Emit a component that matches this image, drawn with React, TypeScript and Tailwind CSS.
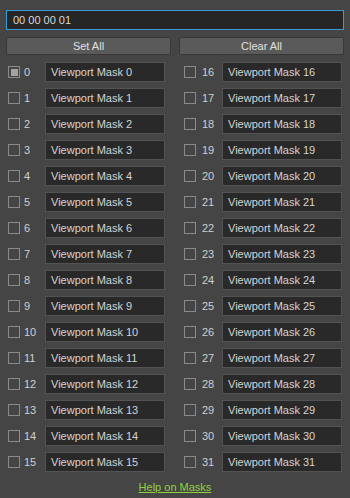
import React from "react";

function Row({ n, checked, right }: { n: number; checked?: boolean; right?: boolean }) {
  return (
    <div className="flex items-center h-[20px]">
      <div className="w-[12px] h-[12px] border border-[#8a8a8a] flex items-center justify-center shrink-0">
        {checked && <div className="w-[7px] h-[7px] bg-[#a3a3a3]" />}
      </div>
      <div className={(right ? "w-[26px] pl-[6px]" : "w-[25px] pl-[4px]") + " text-[#cfcfcf] text-[11px] leading-none shrink-0"}>{n}</div>
      <div className="w-[120px] h-[20px] bg-[#292929] border border-[#535353] flex items-center px-[5px] text-[#d4d4d4] text-[11px] leading-none shrink-0">
        Viewport Mask {n}
      </div>
    </div>
  );
}

export default function App() {
  const left = Array.from({ length: 16 }, (_, i) => i);
  return (
    <div
      className="w-[350px] h-[498px] bg-[#454545] px-[6px] pt-[10px] overflow-hidden"
      style={{ fontFamily: '"Liberation Sans", Arial, sans-serif' }}
    >
      <div className="h-[20px] border border-[#3a9ad9] bg-[#262626] flex items-center px-[6px] text-[#d8d8d8] text-[11px] leading-none">
        00 00 00 01
      </div>
      <div className="mt-[7px] flex gap-[8px]">
        <div className="flex-1 h-[18px] bg-[#5a5a5a] border border-[#383838] rounded-[2px] flex items-center justify-center text-[#e0e0e0] text-[11px] leading-none">
          Set All
        </div>
        <div className="flex-1 h-[18px] bg-[#5a5a5a] border border-[#383838] rounded-[2px] flex items-center justify-center text-[#e0e0e0] text-[11px] leading-none">
          Clear All
        </div>
      </div>
      <div className="mt-[7px] pl-[2px] grid grid-cols-[176px_1fr] grid-flow-col grid-rows-[repeat(16,20px)] gap-y-[6px]">
        {left.map((i) => (
          <Row key={i} n={i} checked={i === 0} />
        ))}
        {left.map((i) => (
          <Row key={i + 16} n={i + 16} right />
        ))}
      </div>
      <div className="mt-[7px] flex justify-center">
        <span className="text-[#8fd13f] text-[11px] underline">Help on Masks</span>
      </div>
    </div>
  );
}
